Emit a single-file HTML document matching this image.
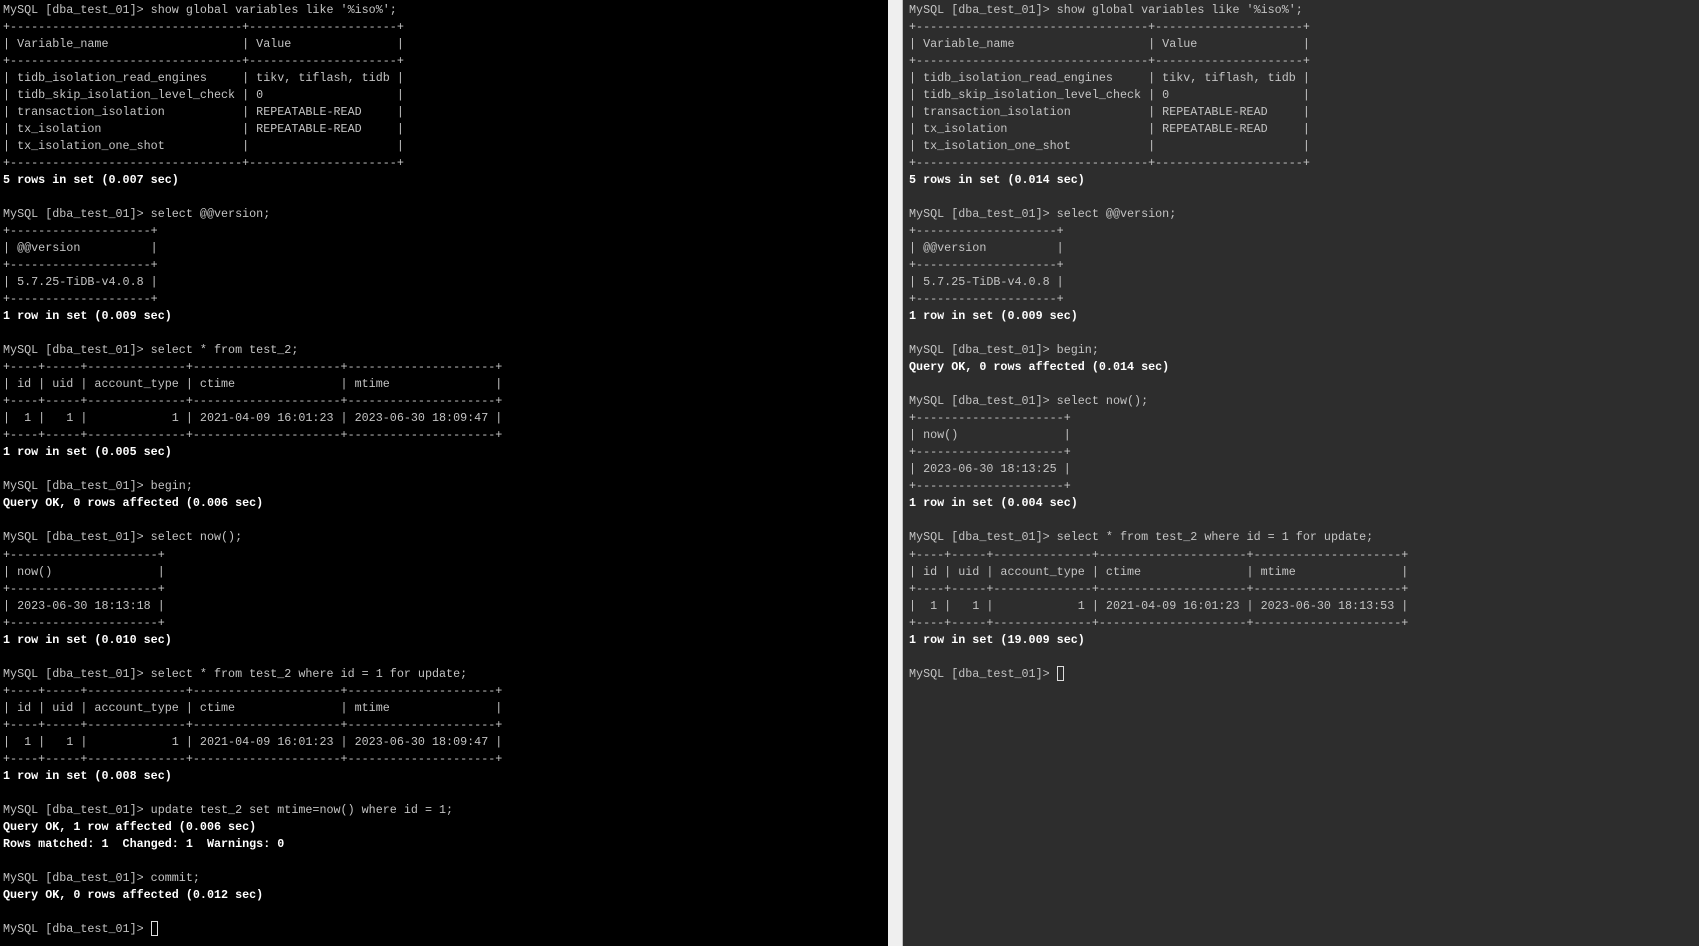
<!DOCTYPE html>
<html><head><meta charset="utf-8"><style>
html,body{margin:0;padding:0;width:1699px;height:946px;overflow:hidden;background:#2d2d2d}
#l{position:absolute;left:0;top:0;width:888px;height:946px;background:#000}
#d{position:absolute;left:888px;top:0;width:15px;height:946px;background:#efefef;border-right:1px solid #bdbdbd;box-sizing:border-box}
pre{position:absolute;top:2px;margin:0;font-family:"Liberation Mono",monospace;font-size:11.73px;line-height:17.02px;color:#c4c4c4;white-space:pre}
#lt{left:3px}
#rt{left:909px}
b{color:#fff;font-weight:bold}
.c{display:inline-block;width:7px;height:15px;border:1px solid #ddd;vertical-align:-4px;box-sizing:border-box}
</style></head><body>
<div id="l"></div><div id="d"></div>
<pre id="lt">MySQL [dba_test_01]&gt; show global variables like '%iso%';
+---------------------------------+---------------------+
| Variable_name                   | Value               |
+---------------------------------+---------------------+
| tidb_isolation_read_engines     | tikv, tiflash, tidb |
| tidb_skip_isolation_level_check | 0                   |
| transaction_isolation           | REPEATABLE-READ     |
| tx_isolation                    | REPEATABLE-READ     |
| tx_isolation_one_shot           |                     |
+---------------------------------+---------------------+
<b>5 rows in set (0.007 sec)</b>

MySQL [dba_test_01]&gt; select @@version;
+--------------------+
| @@version          |
+--------------------+
| 5.7.25-TiDB-v4.0.8 |
+--------------------+
<b>1 row in set (0.009 sec)</b>

MySQL [dba_test_01]&gt; select * from test_2;
+----+-----+--------------+---------------------+---------------------+
| id | uid | account_type | ctime               | mtime               |
+----+-----+--------------+---------------------+---------------------+
|  1 |   1 |            1 | 2021-04-09 16:01:23 | 2023-06-30 18:09:47 |
+----+-----+--------------+---------------------+---------------------+
<b>1 row in set (0.005 sec)</b>

MySQL [dba_test_01]&gt; begin;
<b>Query OK, 0 rows affected (0.006 sec)</b>

MySQL [dba_test_01]&gt; select now();
+---------------------+
| now()               |
+---------------------+
| 2023-06-30 18:13:18 |
+---------------------+
<b>1 row in set (0.010 sec)</b>

MySQL [dba_test_01]&gt; select * from test_2 where id = 1 for update;
+----+-----+--------------+---------------------+---------------------+
| id | uid | account_type | ctime               | mtime               |
+----+-----+--------------+---------------------+---------------------+
|  1 |   1 |            1 | 2021-04-09 16:01:23 | 2023-06-30 18:09:47 |
+----+-----+--------------+---------------------+---------------------+
<b>1 row in set (0.008 sec)</b>

MySQL [dba_test_01]&gt; update test_2 set mtime=now() where id = 1;
<b>Query OK, 1 row affected (0.006 sec)</b>
<b>Rows matched: 1  Changed: 1  Warnings: 0</b>

MySQL [dba_test_01]&gt; commit;
<b>Query OK, 0 rows affected (0.012 sec)</b>

MySQL [dba_test_01]&gt; <span class="c"></span></pre>
<pre id="rt">MySQL [dba_test_01]&gt; show global variables like '%iso%';
+---------------------------------+---------------------+
| Variable_name                   | Value               |
+---------------------------------+---------------------+
| tidb_isolation_read_engines     | tikv, tiflash, tidb |
| tidb_skip_isolation_level_check | 0                   |
| transaction_isolation           | REPEATABLE-READ     |
| tx_isolation                    | REPEATABLE-READ     |
| tx_isolation_one_shot           |                     |
+---------------------------------+---------------------+
<b>5 rows in set (0.014 sec)</b>

MySQL [dba_test_01]&gt; select @@version;
+--------------------+
| @@version          |
+--------------------+
| 5.7.25-TiDB-v4.0.8 |
+--------------------+
<b>1 row in set (0.009 sec)</b>

MySQL [dba_test_01]&gt; begin;
<b>Query OK, 0 rows affected (0.014 sec)</b>

MySQL [dba_test_01]&gt; select now();
+---------------------+
| now()               |
+---------------------+
| 2023-06-30 18:13:25 |
+---------------------+
<b>1 row in set (0.004 sec)</b>

MySQL [dba_test_01]&gt; select * from test_2 where id = 1 for update;
+----+-----+--------------+---------------------+---------------------+
| id | uid | account_type | ctime               | mtime               |
+----+-----+--------------+---------------------+---------------------+
|  1 |   1 |            1 | 2021-04-09 16:01:23 | 2023-06-30 18:13:53 |
+----+-----+--------------+---------------------+---------------------+
<b>1 row in set (19.009 sec)</b>

MySQL [dba_test_01]&gt; <span class="c"></span></pre>
</body></html>
